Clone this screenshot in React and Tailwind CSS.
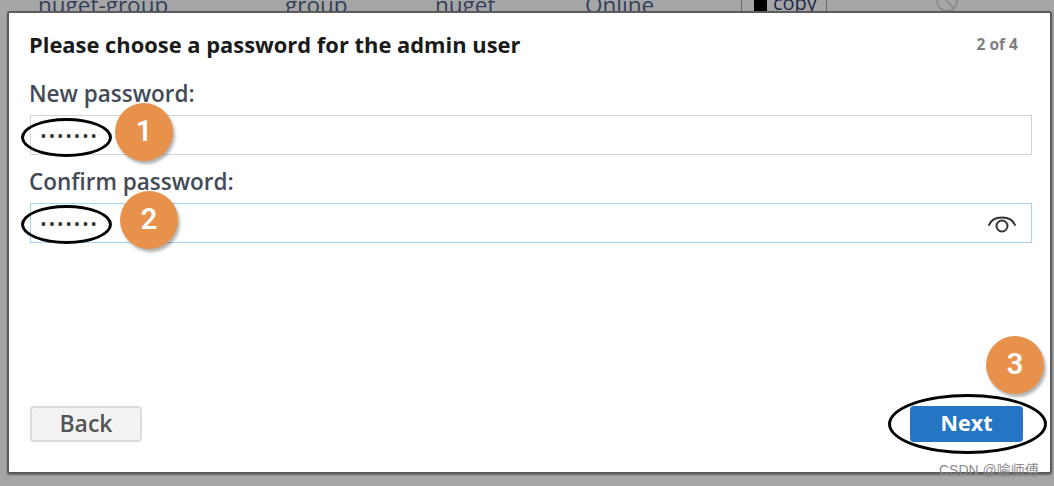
import React from "react";

function Badge({ n, className }) {
  return (
    <div className={"absolute w-[58px] h-[58px] rounded-full bg-[#e8914a] text-white flex items-center justify-center text-[29px] font-semibold font-['Roboto',sans-serif] shadow-[2px_3px_3px_rgba(0,0,0,0.3)] " + className}>
      {n}
    </div>
  );
}

function Ring({ className }) {
  return <div className={"absolute rounded-[50%] border-[3px] border-black " + className} />;
}

const labelCls = "text-[22.5px] leading-[28px] font-semibold text-[#444a55]";
const dotsCls = "text-[#333] text-[13px] tracking-[3.5px] font-bold";

export default function App() {
  return (
    <div className="relative w-[1054px] h-[486px] overflow-hidden bg-[#a6a6a6] font-['Open_Sans',sans-serif] flex flex-col pl-[7px] pr-[2px]">
      <div className="h-[11px] shrink-0 -ml-[7px] pl-[38px] flex items-end overflow-hidden text-[22.5px] leading-[26px] text-[#33405a]">
        <span className="w-[247px] shrink-0 translate-y-[7px]">nuget-group</span>
        <span className="w-[150px] shrink-0 translate-y-[7px]">group</span>
        <span className="w-[150px] shrink-0 translate-y-[7px]">nuget</span>
        <span className="w-[156px] shrink-0 translate-y-[7px]">Online</span>
        <span className="w-[86px] h-[11px] shrink-0 border-x border-[#666] pl-[12px] flex items-center gap-[6px] text-[#1e2a4a] overflow-hidden text-[20px]">
          <span className="w-[13px] h-[13px] bg-black shrink-0" />
          <span className="translate-y-[-3px]">copy</span>
        </span>
        <svg className="ml-[107px] shrink-0 self-start -mt-[12px]" width="26" height="26" viewBox="0 0 26 26" fill="none" stroke="#8f8f8f" strokeWidth="2">
          <circle cx="13" cy="13" r="10" />
          <path d="M6 6 L20 20" />
        </svg>
      </div>

      <div className="w-[1045px] h-[463px] bg-white rounded-[3px] border-2 border-[#5c5c5c] shadow-[0_1px_2px_rgba(0,0,0,0.4)] pl-[20px] pr-[20px] pt-[18px] flex flex-col">
        <div className="flex items-center justify-between h-[28px] pr-[12px]">
          <h1 className="text-[21.9px] leading-[28px] font-bold text-[#1a1a1a]">Please choose a password for the admin user</h1>
          <span className="text-[15.5px] font-bold text-[#7f7f7f]">2 of 4</span>
        </div>

        <label className={"mt-[21px] " + labelCls}>New password:</label>
        <div className={"mt-[7px] h-[40px] w-[1002px] ml-px border border-[#d4d4d4] flex items-center pl-[10px] pt-[3px] " + dotsCls}>•••••••</div>

        <label className={"mt-[13px] " + labelCls}>Confirm password:</label>
        <div className={"mt-[7px] h-[40px] w-[1002px] ml-px border border-[#a8d3f2] flex items-center justify-between pl-[10px] pr-[13px] " + dotsCls}>
          <span className="pt-[3px]">•••••••</span>
          <svg className="-mt-[1px]" width="32" height="24" viewBox="0 0 32 24" fill="none" stroke="#333" strokeWidth="2">
            <path d="M3 14 C7 4 25 4 29 14" strokeLinecap="round" />
            <circle cx="16" cy="15" r="5.5" />
          </svg>
        </div>

        <div className="mt-auto mb-[30px] ml-px flex items-center justify-between pr-[7px]">
          <button className="w-[112px] h-[36px] pb-[3px] rounded-[4px] bg-[#f3f3f3] border-2 border-[#dcdcdc] text-[23px] leading-[28px] font-semibold text-[#555]">Back</button>
          <button className="w-[113px] h-[36px] pb-[2px] rounded-[4px] bg-[#2476c5] text-[21.5px] leading-[28px] font-bold text-white">Next</button>
        </div>
      </div>

      <Ring className="left-[21px] top-[118px] w-[91px] h-[39px]" />
      <Ring className="left-[21px] top-[205px] w-[91px] h-[39px]" />
      <Ring className="left-[888px] top-[394px] w-[159px] h-[60px]" />
      <Badge n="1" className="left-[115px] top-[103px]" />
      <Badge n="2" className="left-[120px] top-[191px]" />
      <Badge n="3" className="left-[986px] top-[336px]" />

      <div className="absolute left-[939px] top-[462px] text-[14px] leading-[16px] text-[#8a8a8a] font-['Liberation_Sans','Noto_Sans_CJK_SC',sans-serif]">CSDN @喻师傅</div>
    </div>
  );
}
